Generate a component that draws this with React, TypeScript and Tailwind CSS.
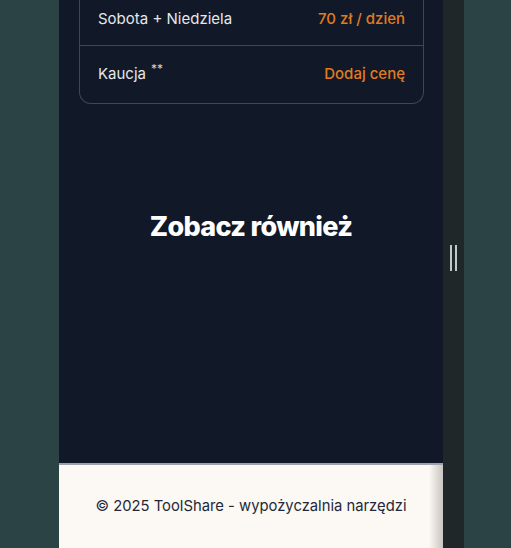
const rows = [
  { label: "Sobota + Niedziela", value: "70 zł / dzień", note: false },
  { label: "Kaucja", value: "Dodaj cenę", note: true },
];

const App = () => {
  return (
    <div
      className="flex w-full h-[548px] overflow-hidden bg-[#2b4345]"
      style={{ fontFamily: "Inter, 'Noto Sans', sans-serif" }}
    >
      <div className="w-[59px] shrink-0" />
      <div className="w-[384px] shrink-0 flex flex-col bg-[#111827]">
        <div className="px-[20px] pr-[19px]">
          <div className="-mt-[11px] border border-t-0 border-[#3f4756] rounded-b-xl">
            {rows.map((r, i) => (
              <div
                key={r.label}
                className={`h-[57px] flex items-center justify-between px-[18px] ${
                  i === 0 ? "border-b border-[#3f4756] pt-[5px]" : ""
                }`}
              >
                <span className="text-[15px] text-[#e5e7eb]">
                  {r.label}
                  {r.note && <sup className="ml-[5px] text-[12px] text-[#d1d5db]">**</sup>}
                </span>
                <span className="text-[15px] font-medium text-[#e07c1f]">{r.value}</span>
              </div>
            ))}
          </div>
        </div>
        <h2 className="mt-[103px] text-center text-[27px] font-extrabold text-white tracking-tight">
          Zobacz również
        </h2>
        <div className="flex-1" />
        <footer className="h-[85px] shrink-0 border-t-2 border-[#9ca3af] bg-[#fcf8f4] flex items-center justify-center relative">
          <p className="text-[14.8px] text-[#1f2937]">© 2025 ToolShare - wypożyczalnia narzędzi</p>
          <div className="absolute right-0 top-0 bottom-0 w-[14px] bg-gradient-to-r from-transparent to-[#c9c5c0]" />
        </footer>
      </div>
      <div className="w-[21px] shrink-0 bg-[#1f2728] flex justify-center">
        <div className="mt-[245px] flex gap-[3px] h-[26px]">
          <div className="w-[2px] bg-[#c4c7c9]" />
          <div className="w-[2px] bg-[#c4c7c9]" />
        </div>
      </div>
    </div>
  );
};

export default App;
